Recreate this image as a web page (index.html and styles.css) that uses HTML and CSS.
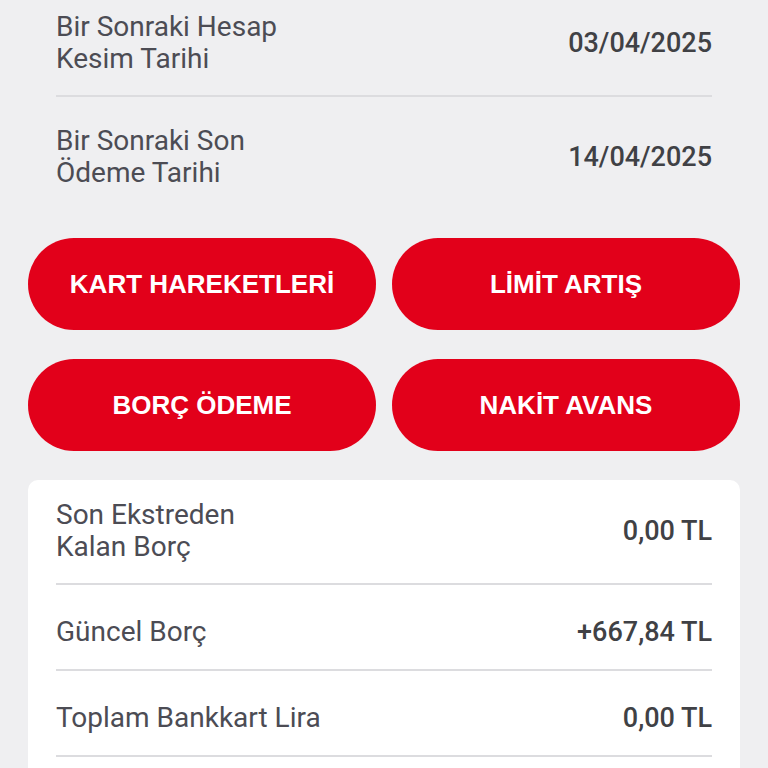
FILE: index.html
```html
<!DOCTYPE html>
<html lang="tr">
<head>
<meta charset="UTF-8">
<meta name="viewport" content="width=device-width, initial-scale=1.0">
<title>Kart Detayı</title>
<link rel="stylesheet" href="styles.css">
</head>
<body>

<div class="dates">
    <div class="row first">
        <span class="label">Bir Sonraki Hesap<br>Kesim Tarihi</span>
        <span class="value">03/04/2025</span>
    </div>
    <div class="row last">
        <span class="label">Bir Sonraki Son<br>Ödeme Tarihi</span>
        <span class="value">14/04/2025</span>
    </div>
</div>

<div class="actions">
    <button class="btn">KART HAREKETLERİ</button>
    <button class="btn">LİMİT ARTIŞ</button>
    <button class="btn">BORÇ ÖDEME</button>
    <button class="btn">NAKİT AVANS</button>
</div>

<div class="card">
    <div class="crow top">
        <span class="label">Son Ekstreden<br>Kalan Borç</span>
        <span class="value">0,00 TL</span>
    </div>
    <div class="crow">
        <span class="label">Güncel Borç</span>
        <span class="value">+667,84 TL</span>
    </div>
    <div class="crow">
        <span class="label">Toplam Bankkart Lira</span>
        <span class="value">0,00 TL</span>
    </div>
</div>

</body>
</html>
```

FILE: styles.css
```css
body{
    margin: 0;
    font-family: Roboto, "Liberation Sans", sans-serif;
    background-color: #efeff1;
    overflow: hidden;
}
.dates{
    padding: 0 56px;
}
.row, .crow{
    display: flex;
    align-items: center;
    justify-content: space-between;
}
.row.first{
    padding: 11px 0 20px;
    border-bottom: 2px solid #dcdcdf;
}
.row.last{
    padding: 28px 0 0;
}
.label{
    font-size: 28px;
    line-height: 32px;
    font-weight: 400;
    color: #4c4c54;
}
.value{
    font-size: 27px;
    line-height: 32px;
    font-weight: 500;
    color: #404145;
}

.actions{
    display: grid;
    grid-template-columns: 1fr 1fr;
    column-gap: 16px;
    row-gap: 29px;
    padding: 0 28px;
    margin-top: 49px;
}
.btn{
    height: 92px;
    border: none;
    border-radius: 46px;
    background-color: #e2001a;
    color: #fff;
    font-family: "Liberation Sans", Arial, sans-serif;
    font-size: 26px;
    font-weight: 700;
}

.card{
    margin: 29px 28px 0;
    padding: 0 28px 60px;
    background-color: #fff;
    border-radius: 10px;
}
.crow{
    padding: 31px 0 21px;
    border-bottom: 2px solid #dcdcdf;
}
.crow.top{
    padding: 19px 0 20px;
}
```
